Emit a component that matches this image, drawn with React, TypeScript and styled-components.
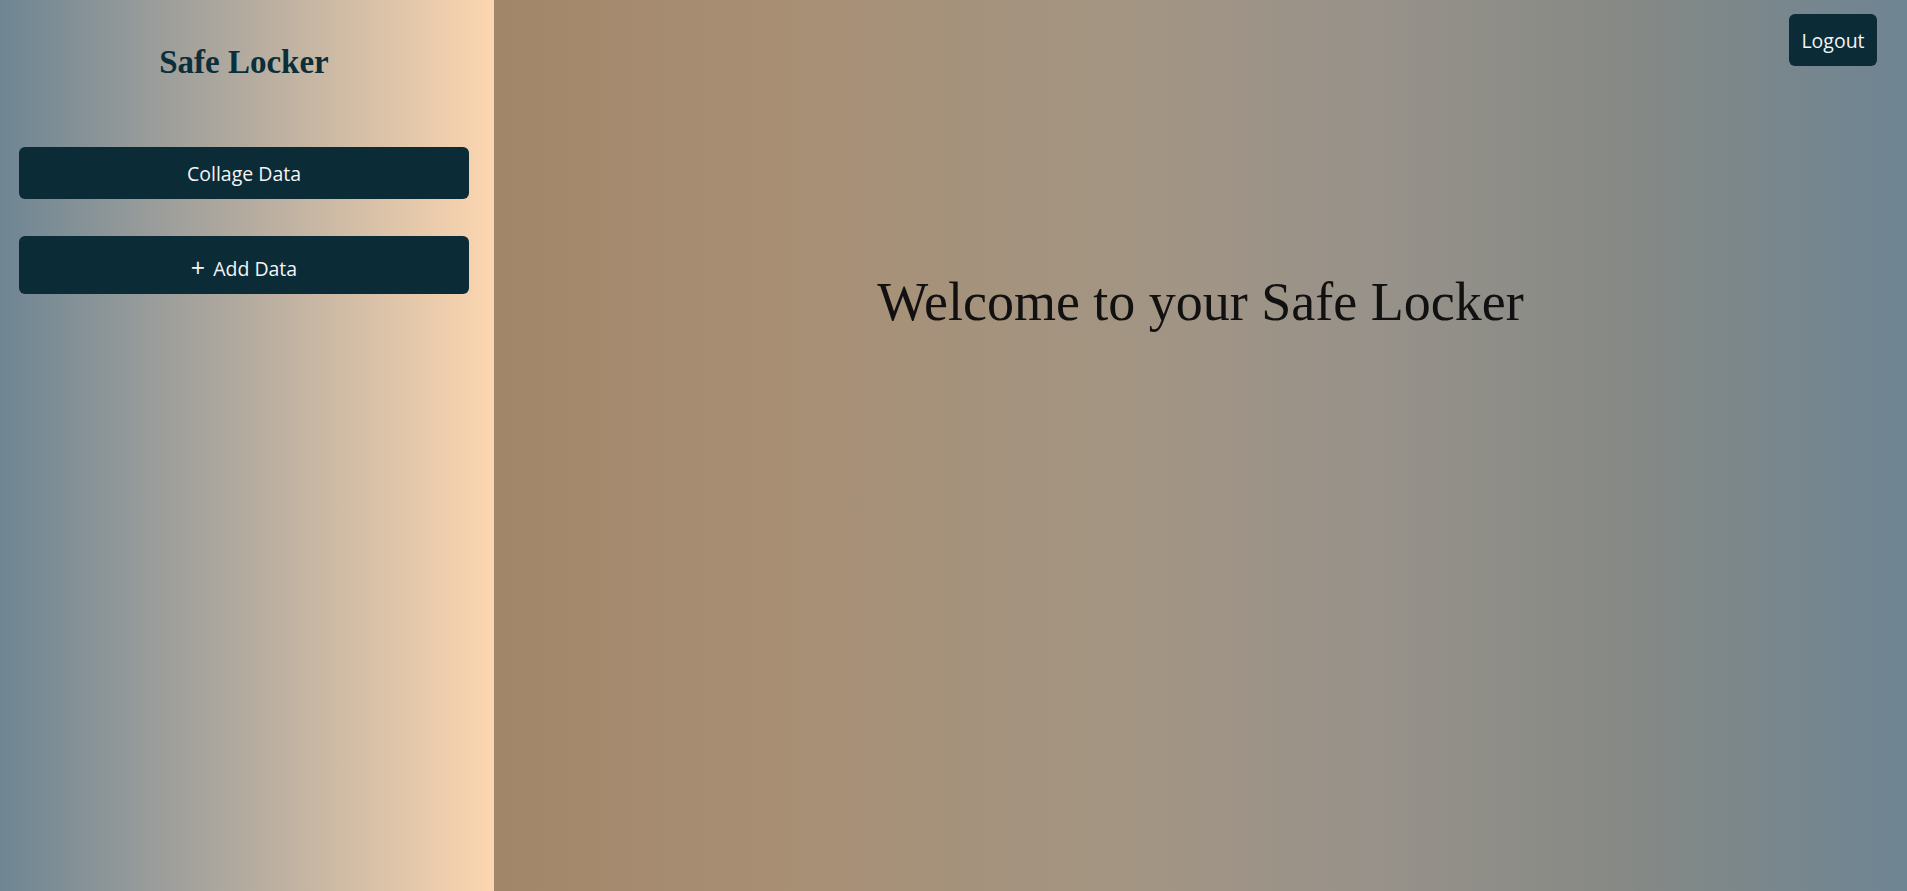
import React from "react";
import styled, { createGlobalStyle } from "styled-components";

const GlobalStyle = createGlobalStyle`
  html, body { margin: 0; padding: 0; height: 100%; }
  body { font-family: "Open Sans", "Noto Sans", sans-serif; overflow: hidden; }
  #root { height: 100%; }
  * { box-sizing: border-box; }
`;

const Layout = styled.div`
  display: flex;
  width: 100%;
  height: 891px;
`;

const Sidebar = styled.aside`
  width: 494px;
  flex-shrink: 0;
  display: flex;
  flex-direction: column;
  padding: 44px 25px 0 19px;
  background: linear-gradient(to right, #6e8593 0%, #b4ab9f 50%, #fcd6b0 100%);
`;

const Brand = styled.h2`
  margin: 0 0 66px;
  font-family: "Liberation Serif", "Times New Roman", serif;
  font-weight: 700;
  font-size: 33px;
  line-height: 37px;
  color: #0b2f3a;
  text-align: center;
`;

const NavList = styled.nav`
  display: flex;
  flex-direction: column;
  gap: 37px;
`;

const NavButton = styled.button<{ $h: number; $shift?: number }>`
  width: 100%;
  height: ${(p) => p.$h}px;
  padding: ${(p) => p.$shift ?? 0}px 0 0;
  border: none;
  border-radius: 6px;
  background: #0b2c37;
  color: #f4f4f4;
  font-family: "Open Sans", "Noto Sans", sans-serif;
  font-size: 19.5px;
  cursor: pointer;
  display: flex;
  align-items: center;
  justify-content: center;
  gap: 8px;
`;

const PlusGlyph = styled.span`
  font-size: 25px;
  line-height: 1;
  margin-top: -1px;
`;

const Main = styled.main`
  flex: 1;
  display: flex;
  flex-direction: column;
  background: linear-gradient(
    to right,
    #a2866a 0%,
    #a88f74 20%,
    #a39583 45%,
    #98928a 62%,
    #868985 80%,
    #6e8593 100%
  );
`;

const TopBar = styled.header`
  display: flex;
  justify-content: flex-end;
  padding: 14px 30px 0;
`;

const Content = styled.section`
  text-align: center;
`;

const Welcome = styled.h1`
  margin: 204px 0 0;
  font-family: "Liberation Serif", "Times New Roman", serif;
  font-weight: 400;
  font-size: 54px;
  line-height: 1.2;
  color: #111111;
`;

const LogoutButton = styled.button`
  width: 88px;
  height: 52px;
  border: none;
  border-radius: 6px;
  background: #0b2c37;
  color: #f4f4f4;
  font-family: "Open Sans", "Noto Sans", sans-serif;
  font-size: 19.5px;
  cursor: pointer;
`;

export default function App() {
  return (
    <>
      <GlobalStyle />
      <Layout>
        <Sidebar>
          <Brand>Safe Locker</Brand>
          <NavList>
            <NavButton $h={52}>Collage Data</NavButton>
            <NavButton $h={58} $shift={6}>
              <PlusGlyph>+</PlusGlyph>
              <span>Add Data</span>
            </NavButton>
          </NavList>
        </Sidebar>
        <Main>
          <TopBar>
            <LogoutButton>Logout</LogoutButton>
          </TopBar>
          <Content>
            <Welcome>Welcome to your Safe Locker</Welcome>
          </Content>
        </Main>
      </Layout>
    </>
  );
}
